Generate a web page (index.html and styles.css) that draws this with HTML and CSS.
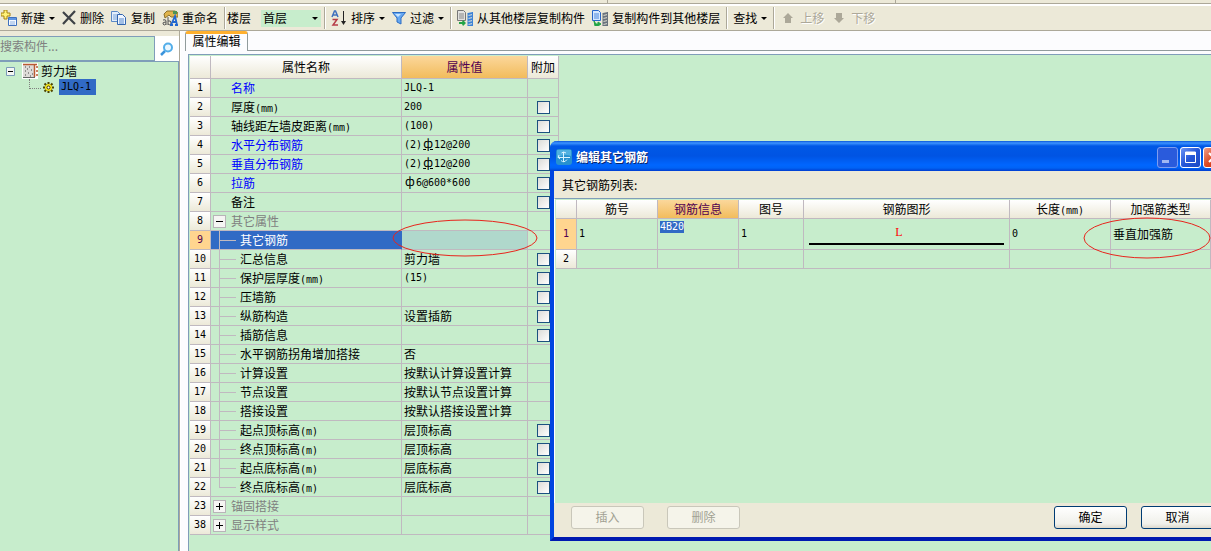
FILE: index.html
```
<!DOCTYPE html>
<html lang="zh-CN">
<head>
<meta charset="utf-8">
<title>属性编辑</title>
<link rel="stylesheet" href="styles.css">
</head>
<body>
<div class="strip"><i></i><i></i></div>
<nav class="toolbar">
  <button class="tool"><svg width="16" height="16" viewBox="0 0 16 16"><path d="M3 0h3v3h3v3H6v3H3V6H0V3h3z" fill="#fff27a" stroke="#a88410"/><path d="M7.500 7.500h8v8h-8z" fill="#f4f9ff" stroke="#3e70bd"/><path d="M8 8h7v2H8z" fill="#5f95e2"/><path d="M9 12h5M9 14h5" stroke="#8db1e2"/></svg>新建<b class="arrow"></b></button>
  <button class="tool"><svg width="14" height="16" viewBox="0 0 14 16"><path d="M1 2l12 12M13 1L1 14" stroke="#3e4247" stroke-width="2.200" fill="none"/></svg>删除</button>
  <button class="tool"><svg width="16" height="16" viewBox="0 0 16 16"><path d="M.5 1.500h6l3 3v7h-9z" fill="#e3eefb" stroke="#5b88c6"/><path d="M2 5h5M2 7h5M2 9h5" stroke="#7da5da"/><path d="M6.500 4.500h5l3 3v7h-8z" fill="#f0f6ff" stroke="#3265ae"/><path d="M8 9h5M8 11h5M8 13h5" stroke="#5487cc"/></svg>复制</button>
  <button class="tool"><svg width="16" height="16" viewBox="0 0 16 16"><path d="M2 4l3-3h8l3 2v4H9L7 5 3 8z" fill="#e0b44c" stroke="#8b702b"/><path d="M11 1h4v3h-4z" fill="#4f9450"/><path d="M1 10q3-1 3 1v4M4 12q-4 0-3 2t3 0M6 7v8M6 11q3-1 3 2t-3 1" stroke="#555" fill="none"/><path d="M8 15h3M9 15l4-9 2 9M10 12h4M13 15h3" stroke="#2268cf" stroke-width="1.800" fill="none"/></svg>重命名</button>
  <span class="sep"></span>
  <label for="floor">楼层</label>
  <span class="combo"><select id="floor"><option>首层</option></select><b class="arrow"></b></span>
  <span class="sep"></span>
  <button class="tool"><svg width="16" height="16" viewBox="0 0 16 16"><path d="M1 7l2.500-6h1L7 7M2 5h4" stroke="#3f70bd" stroke-width="1.500" fill="none"/><path d="M1.500 9.500H6L2 15h5" stroke="#b63d48" stroke-width="1.500" fill="none"/><path d="M12.500 1v12" stroke="#222"/><path d="M10 11h5l-2.500 4z" fill="#222"/></svg>排序<b class="arrow"></b></button>
  <button class="tool"><svg width="14" height="16" viewBox="0 0 14 16"><path d="M.5 2.500h13L9 8v6l-4-2V8z" fill="#66a8f2" stroke="#2c6dc3"/><path d="M3 4h6L6 7z" fill="#c9e5ff"/></svg>过滤<b class="arrow"></b></button>
  <span class="sep"></span>
  <button class="tool"><svg width="16" height="16" viewBox="0 0 16 16"><path d="M.5.5h6l2 2v8h-8z" fill="#e2e2e0" stroke="#777"/><path d="M2 4h5M2 6h5M2 8h5" stroke="#888"/><path d="M11 4l5-1M11 7l5-1M11 10l5-1M11 13l5-1M11 16l5-1" stroke="#3c82d6" stroke-width="2"/><path d="M11 3v13M15.500 2v13" stroke="#3c82d6"/><path d="M2 12h3l1-2 3 3-3 3-1-2H2z" fill="#22a447"/></svg>从其他楼层复制构件</button>
  <button class="tool"><svg width="16" height="16" viewBox="0 0 16 16"><path d="M.5.5h6l2 2v8h-8z" fill="#d5e7ff" stroke="#2866c9"/><path d="M2 4h5M2 6h5M2 8h5" stroke="#4c88dc"/><path d="M11 4l5-1M11 7l5-1M11 10l5-1M11 13l5-1M11 16l5-1" stroke="#68727d" stroke-width="2"/><path d="M11 3v13M15.500 2v13" stroke="#68727d"/><path d="M2 11l2 3h2v-2l3 2-3 2H3z" fill="#22a447" stroke="#22a447"/></svg>复制构件到其他楼层</button>
  <span class="sep"></span>
  <button class="tool">查找<b class="arrow"></b></button>
  <span class="sep"></span>
  <button class="tool" disabled><svg width="16" height="16" viewBox="0 0 16 16"><path d="M8 3l5 5h-2v5H5V8H3z" fill="#aca899"/></svg>上移</button>
  <button class="tool" disabled><svg width="16" height="16" viewBox="0 0 16 16"><path d="M8 13L3 8h2V3h6v5h2z" fill="#aca899"/></svg>下移</button>
</nav>
<main class="work">
  <aside class="side">
    <form class="search">
      <input type="text" placeholder="搜索构件..." aria-label="搜索构件">
      <button type="button" aria-label="搜索"><svg width="14" height="14" viewBox="0 0 14 14"><path d="M5 9l-4 4" stroke="#3b94dc" stroke-width="2.500"/><circle cx="8" cy="5.500" r="4" fill="#eaf7ff" stroke="#53aee9" stroke-width="2"/></svg></button>
    </form>
    <ul class="tree">
      <li><svg width="9" height="9" viewBox="0 0 9 9"><path d="M.5.5h8v8h-8z" fill="#f5f6f4" stroke="#7b9ab8"/><path d="M2 4.500h5" stroke="#000"/></svg><svg class="wall" width="16" height="16" viewBox="0 0 16 16"><path d="M0 0h16v16H0z" fill="#fff"/><path d="M1 2h11v12H1z" fill="#dedbd8"/><path d="M1 1.500h14M12.500 2v12M14 4h2M14 8h2M14 12h2" stroke="#b95a32" stroke-width="1.500"/><path d="M3 4h1M7 4h1M5 6h1M9 7h1M3 8h1M6 10h1M10 11h1M3 12h1M8 13h1" stroke="#444"/><path d="M1 14.500h12" stroke="#666"/></svg>剪力墙</li>
      <li class="leaf"><svg width="11" height="11" viewBox="0 0 11 11"><path d="M5.500 0v11M0 5.500h11M1.500 1.500l8 8M9.500 1.500l-8 8" stroke="#4b4300" stroke-width="2"/><circle cx="5.500" cy="5.500" r="3.500" fill="#f5e41c"/><circle cx="5.500" cy="5.500" r="1.500" fill="#fff" stroke="#3c3700"/></svg><span class="m picked">JLQ-1</span></li>
    </ul>
  </aside>
  <section class="panel">
    <div class="tabs"><button class="tab">属性编辑</button><span class="tabline"></span></div>
    <div class="sheet">
      <table class="grid props">
        <colgroup><col class="c-no"><col class="c-name"><col class="c-val"><col class="c-add"></colgroup>
        <thead><tr><th></th><th>属性名称</th><th class="hot">属性值</th><th>附加</th></tr></thead>
        <tbody>
        <tr><th>1</th><td class="key">名称</td><td class="m">JLQ-1</td><td></td></tr>
        <tr><th>2</th><td>厚度<span class="m">(mm)</span></td><td class="m">200</td><td><input type="checkbox" aria-label="厚度附加"></td></tr>
        <tr><th>3</th><td>轴线距左墙皮距离<span class="m">(mm)</span></td><td class="m">(100)</td><td><input type="checkbox" aria-label="轴线距左墙皮距离附加"></td></tr>
        <tr><th>4</th><td class="key">水平分布钢筋</td><td class="m">(2)<span class="phi bar">ф</span>12@200</td><td><input type="checkbox" aria-label="水平分布钢筋附加"></td></tr>
        <tr><th>5</th><td class="key">垂直分布钢筋</td><td class="m">(2)<span class="phi bar">ф</span>12@200</td><td><input type="checkbox" aria-label="垂直分布钢筋附加"></td></tr>
        <tr><th>6</th><td class="key">拉筋</td><td class="m"><span class="phi">ф</span>6@600*600</td><td><input type="checkbox" aria-label="拉筋附加"></td></tr>
        <tr><th>7</th><td>备注</td><td></td><td><input type="checkbox" aria-label="备注附加"></td></tr>
        <tr><th>8</th><td class="group"><div class="node"><button class="fold minus" aria-label="折叠"></button>其它属性</div></td><td></td><td></td></tr>
        <tr class="current"><th>9</th><td class="sub">其它钢筋</td><td></td><td></td></tr>
        <tr><th>10</th><td class="sub">汇总信息</td><td>剪力墙</td><td><input type="checkbox" aria-label="汇总信息附加"></td></tr>
        <tr><th>11</th><td class="sub">保护层厚度<span class="m">(mm)</span></td><td class="m">(15)</td><td><input type="checkbox" aria-label="保护层厚度附加"></td></tr>
        <tr><th>12</th><td class="sub">压墙筋</td><td></td><td><input type="checkbox" aria-label="压墙筋附加"></td></tr>
        <tr><th>13</th><td class="sub">纵筋构造</td><td>设置插筋</td><td><input type="checkbox" aria-label="纵筋构造附加"></td></tr>
        <tr><th>14</th><td class="sub">插筋信息</td><td></td><td><input type="checkbox" aria-label="插筋信息附加"></td></tr>
        <tr><th>15</th><td class="sub">水平钢筋拐角增加搭接</td><td>否</td><td></td></tr>
        <tr><th>16</th><td class="sub">计算设置</td><td>按默认计算设置计算</td><td></td></tr>
        <tr><th>17</th><td class="sub">节点设置</td><td>按默认节点设置计算</td><td></td></tr>
        <tr><th>18</th><td class="sub">搭接设置</td><td>按默认搭接设置计算</td><td></td></tr>
        <tr><th>19</th><td class="sub">起点顶标高<span class="m">(m)</span></td><td>层顶标高</td><td><input type="checkbox" aria-label="起点顶标高附加"></td></tr>
        <tr><th>20</th><td class="sub">终点顶标高<span class="m">(m)</span></td><td>层顶标高</td><td><input type="checkbox" aria-label="终点顶标高附加"></td></tr>
        <tr><th>21</th><td class="sub">起点底标高<span class="m">(m)</span></td><td>层底标高</td><td><input type="checkbox" aria-label="起点底标高附加"></td></tr>
        <tr><th>22</th><td class="sub last">终点底标高<span class="m">(m)</span></td><td>层底标高</td><td><input type="checkbox" aria-label="终点底标高附加"></td></tr>
        <tr><th>23</th><td class="group"><div class="node"><button class="fold" aria-label="展开"></button>锚固搭接</div></td><td></td><td></td></tr>
        <tr><th>38</th><td class="group"><div class="node"><button class="fold" aria-label="展开"></button>显示样式</div></td><td></td><td></td></tr>
        </tbody>
      </table>
    </div>
  </section>
</main>

<section class="dialog" role="dialog" aria-labelledby="dlg-title">
  <header class="title">
    <svg width="16" height="16" viewBox="0 0 16 16"><rect width="16" height="16" rx="3" fill="#2791cf"/><path d="M1 1h14v6Q8 4 1 9z" fill="#4fb0e0"/><path d="M7.500 3v10M5.500 4q2-2 4.500 0M2 8.500h12M3 6q-2 3 1 4M5 11.500q3 3 6-1" stroke="#d8f3ff" fill="none"/></svg>
    <h2 id="dlg-title">编辑其它钢筋</h2>
    <button class="win dim" aria-label="最小化"><svg width="21" height="21" viewBox="0 0 21 21"><path d="M5 13h7v3H5z" fill="#9fb7f3"/></svg></button>
    <button class="win" aria-label="最大化"><svg width="21" height="21" viewBox="0 0 21 21"><path d="M5.500 5v10.500h10V5z" stroke="#fff" fill="none"/><path d="M5 5h11v3H5z" fill="#fff"/></svg></button>
    <button class="win close" aria-label="关闭"><svg width="21" height="21" viewBox="0 0 21 21"><path d="M6 6l9 9M15 6l-9 9" stroke="#fff" stroke-width="2"/></svg></button>
  </header>
  <p class="caption">其它钢筋列表:</p>
  <div class="list">
    <table class="grid bars">
      <colgroup><col class="d-no"><col class="d-id"><col class="d-id"><col class="d-fig"><col class="d-shape"><col class="d-len"><col class="d-type"></colgroup>
      <thead><tr><th></th><th>筋号</th><th class="hot">钢筋信息</th><th>图号</th><th>钢筋图形</th><th>长度<span class="m">(mm)</span></th><th>加强筋类型</th></tr></thead>
      <tbody>
      <tr class="tall"><th class="on">1</th><td class="m">1</td><td class="edit"><span class="m">4B20</span></td><td class="m">1</td><td class="shape"><span>L</span></td><td class="m">0</td><td>垂直加强筋</td></tr>
      <tr><th>2</th><td></td><td></td><td></td><td></td><td></td><td></td></tr>
      </tbody>
    </table>
  </div>
  <footer class="foot">
    <button class="push" disabled>插入</button><button class="push" disabled>删除</button><span class="fill"></span><button class="push">确定</button><button class="push">取消</button>
  </footer>
</section>
<svg class="ring ring-a" width="146" height="38" viewBox="0 0 146 38"><ellipse cx="73" cy="19" rx="72" ry="18"/></svg>
<svg class="ring ring-b" width="128" height="42" viewBox="0 0 128 42"><ellipse cx="64" cy="21" rx="63" ry="20"/></svg>
</body>
</html>
```
FILE: styles.css
```
* { box-sizing: border-box; }
body {
  margin: 0;
  height: 100vh;
  display: flex;
  flex-direction: column;
  position: relative;
  overflow: hidden;
  background: #ece9d8;
  color: #000;
  font: 12px/16px "Noto Sans CJK SC", sans-serif;
}
button, input, select { font: inherit; color: inherit; margin: 0; }
button { padding: 0; border: 0; background: none; }
svg { flex: none; display: block; }
.m { font-family: "DejaVu Sans Mono", "Noto Sans CJK SC", monospace; font-size: 10px; }
span.m { line-height: 12px; }

.strip { display: flex; justify-content: space-evenly; height: 4px; padding: 0 29px 0 321px; border-bottom: 1px solid #aca899; }
.strip i { border-left: 1px solid #aca899; }
.toolbar {
  display: flex;
  align-items: center;
  flex: none;
  height: 27px;
  white-space: nowrap;
  border-top: 2px solid #fff;
  border-bottom: 1px solid #aca899;
}
.tool { display: flex; align-items: center; gap: 4px; padding: 0 3px 0 4px; }
.tool:first-child { padding-left: 1px; }
.tool:disabled { color: #aca899; text-shadow: 1px 1px #fff; }
.arrow { border: 3px solid transparent; border-top-color: #000; border-bottom: 0; }
.sep { width: 2px; height: 22px; margin: 0 1px 0 3px; border-left: 1px solid #aca899; border-right: 1px solid #fff; }
.combo { display: grid; align-items: center; width: 60px; margin-left: 10px; background: #c7edcc; }
.combo > * { grid-area: 1 / 1; }
.combo .arrow { justify-self: end; margin-right: 3px; pointer-events: none; }
.combo select { appearance: none; width: 100%; height: 17px; line-height: 16px; padding: 0 2px 2px; border: 0; background: none; }

.work { display: flex; flex: 1; min-height: 0; }
.side { display: flex; flex-direction: column; width: 180px; flex: none; padding-top: 5px; border-right: 1px solid #aca899; }
.search { display: flex; height: 25px; }
.search input { flex: 1; min-width: 0; padding: 0 0 5px; border: 1px solid #7f9db9; border-left: 0; background: #c7edcc; }
.search input::placeholder { color: #808080; opacity: 1; }
.search button { display: grid; place-items: center; width: 24px; background: #fff; }
.tree { flex: 1; margin: 0; padding: 1px 0 0 6px; list-style: none; background: #c7edcc; border-top: 1px solid #7f9db9; border-right: 1px solid #7f9db9; }
.tree li { display: flex; align-items: center; height: 16px; }
.tree .wall { margin: 0 3px 0 7px; }
.tree .leaf { margin-left: 23px; gap: 5px; }
.leaf::before { content: ""; width: 11px; height: 9px; align-self: flex-start; margin-right: -3px; border: dotted #808080; border-width: 0 0 1px 1px; }
.tree .picked { padding: 0 5px 0 2px; background: #316ac5; line-height: 16px; }

.panel { display: flex; flex-direction: column; flex: 1; min-width: 0; padding-left: 4px; background: #fcfcfe; border-left: 1px solid #fff; }
.tabs { display: flex; height: 23px; flex: none; }
.tab { width: 63px; height: 20px; align-self: flex-start; padding-bottom: 4px; border: 1px solid #919b9c; border-top: 3px solid #ffb02e; border-bottom: 0; border-radius: 3px 3px 0 0; line-height: 12px; }
.tabline { flex: 1; height: 20px; border-bottom: 1px solid #919b9c; }
.sheet { flex: 1; margin-left: 3px; border: 1px solid #7f9db9; border-right: 0; border-bottom: 0; padding: 1px 0 0 1px; background: #c7edcc; }

.grid { table-layout: fixed; border-collapse: separate; border-spacing: 0; width: 369px; }
.grid td, .grid th { height: 19px; padding: 0 2px; border: solid #c0b9c0; border-width: 0 1px 1px 0; font-weight: normal; white-space: nowrap; line-height: 16px; text-align: left; }
.grid th { padding: 0; text-align: center; background: linear-gradient(#fff, #ece9d8); }
.grid tbody th { font-family: "DejaVu Sans Mono", monospace; font-size: 10px; }
.grid thead .hot { color: #500050; background: linear-gradient(#fbd79b, #f2bc5c); }
.grid .on, .current th { color: #500050; background: #ffd58f; }
.props thead th { height: 23px; }
.c-no { width: 21px; }
.c-name { width: 191px; }
.c-val { width: 126px; }
.c-add { width: 31px; }
.props td:nth-child(2) { padding-left: 20px; }
.props .key { color: #00f; }
.phi { display: inline-block; width: 12px; line-height: 12px; text-align: center; font-family: "Noto Sans CJK SC", sans-serif; font-size: 12px; }
.bar { text-decoration: underline; }
.props td.group:nth-child(2) { padding-left: 2px; color: #808080; }
.node { display: flex; align-items: center; gap: 5px; }
.fold { width: 13px; height: 13px; border: 1px solid #b8b4b8;
  background: linear-gradient(#000, #000) center / 7px 1px no-repeat, linear-gradient(#000, #000) center / 1px 7px no-repeat, #f5f5f3; }
.fold.minus { background: linear-gradient(#000, #000) center / 7px 1px no-repeat, #f5f5f3; }
.props td.sub:nth-child(2) { padding-left: 29px; background: linear-gradient(#c0b9c0, #c0b9c0) 8px 9px / 17px 1px no-repeat, linear-gradient(#c0b9c0, #c0b9c0) 8px 0 / 1px 100% no-repeat; }
.props td.last:nth-child(2) { background-size: 17px 1px, 1px 9px; }
.props .current td.sub:nth-child(2) { color: #fff; background-color: #316ac5; border-right-color: #316ac5; }
.current td:nth-child(3) { background: #b0d8cc; }
.grid input { appearance: none; display: block; width: 13px; height: 13px; margin: 0 auto; border: 1px solid #1c5180; background: linear-gradient(135deg, #dcdcd7, #fff); }

.dialog {
  position: absolute;
  left: 550px;
  top: 141px;
  width: 680px;
  height: 400px;
  display: flex;
  flex-direction: column;
  border: solid #0045e0;
  border-width: 0 4px 4px;
  border-bottom-color: #0019b0;
  border-radius: 7px 7px 0 0;
  background: #ece9d8;
}
.title { display: flex; align-items: center; gap: 2px; height: 30px; flex: none; margin: 0 -4px; padding: 2px 6px 0; border-radius: 7px 7px 0 0; color: #fff;
  background: linear-gradient(#0a55d8, #3c94ff 2px, #0058e6 5px, #0054e3 15px, #0066ff 24px, #0063f5 27px, #003dd0); }
.title h2 { flex: 1; margin: 0 0 0 2px; font-size: 12px; font-weight: bold; text-shadow: 1px 1px #0a246a; }
.win { width: 21px; height: 21px; border: 1px solid #fff; border-radius: 3px; background: linear-gradient(135deg, #6c95f5, #2456d8 50%, #1a48c4); }
.win svg { margin: -1px; }
.win.dim { border-color: #7e9df0; background: #2a5bdc; }
.win.close { background: linear-gradient(135deg, #f0a088, #dc4a24 50%, #c03010); }
.caption { margin: 0; padding: 6px 8px 5px; }
.list { flex: 1; border-top: 1px solid #7f9db9; border-left: 1px solid #fff; padding: 1px 0 0 1px; background: #c7edcc; }
.bars { width: 655px; }
.d-no { width: 21px; }
.d-id { width: 81px; }
.d-fig { width: 65px; }
.d-shape { width: 206px; }
.d-len { width: 101px; }
.d-type { width: 100px; }
.bars .tall td, .bars .tall th { height: 31px; }
.bars .edit { padding-top: 2px; vertical-align: top; line-height: 12px; }
.edit .m { display: block; width: max-content; background: #316ac5; color: #fff; }
.bars .shape { padding: 0 5px; color: #f00; font-family: "Liberation Serif", serif; text-align: center; }
.shape span { display: block; border-bottom: 2px solid #000; padding: 0 15px 3px 0; }
.foot { display: flex; align-items: center; height: 34px; flex: none; padding: 0 12px 6px 17px; }
.push { width: 73px; height: 23px; margin-right: 23px; padding-bottom: 1px; border: 1px solid #003c74; border-radius: 3px; background: linear-gradient(#fff, #f0f0ea 80%, #dcd8cc); line-height: 16px; }
.push:disabled { color: #a1a192; border-color: #c9c7ba; background: #f5f4ea; }
.fill { flex: 1; }
.fill ~ .push { margin: 0 0 0 14px; }

.ring { position: absolute; fill: none; stroke: #e8241c; pointer-events: none; }
.ring-a { left: 392px; top: 219px; }
.ring-b { left: 1083px; top: 217px; }
```
